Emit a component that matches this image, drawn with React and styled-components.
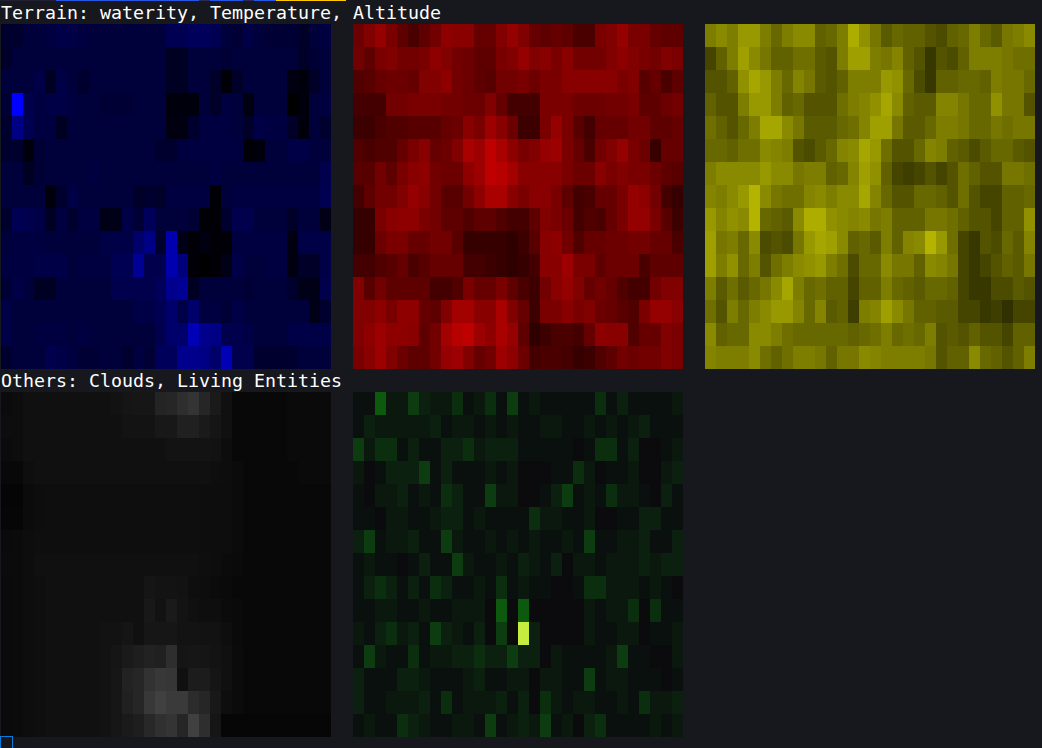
import React from "react";
import styled, { createGlobalStyle } from "styled-components";

const GlobalStyle = createGlobalStyle`
  html, body {
    margin: 0;
    height: 100%;
    background: #16181e;
  }
`;

// every map is 30 columns x 15 rows, one base-36 level per cell
const blueRows = [
  "88aabccbaaaaaaaeeffea9ca9997ab",
  "7aaaaaaaaaaaaaa66aaa9aaaaaa79a",
  "aaac6ca8aaaaaaa66aa717aaaa327a",
  "9zdbccbaa999aaa222a7ba3aaa02ab",
  "8kebb6aaaaaaaaa338bbba7cbb72a8",
  "8829aaaaaaaaaa88bbbbbb12aaccaa",
  "aa69aaaabaaaaaaaaaabaaaaaaaaad",
  "aaaa28caaaaa787bbbb1abbbbbbbbe",
  "8edc6b8bb44c9faaa9118ddaaa7aa4",
  "abbbaaaaaccchk8p41311bbbbb3ccc",
  "bbbcccabbbeemddpj1014caabb377c",
  "9ca66aaaaaddddflm6aaaa9aaa844d",
  "caaaaaaaaaaaccehchbb9caaaaaa48",
  "caabbbabaaaaaadhhqlkddcaaacccc",
  "8aaadcb99aa8b9ffllkhqdd8888aaa",
];

const redRows = [
  "gjmiebehlkkffjmjfefebbijmiifee",
  "heijhhiljhgeeijmjkikhhhjljihji",
  "cdfggfjjlhgedhhigiikkkkkijdfbe",
  "aaahhiiihhggjfaaaiiiggghhieegh",
  "99bccdddfgkinkg99imidafffhheef",
  "cbccfikfgjpnsplijmnifbhjmig8ff",
  "ddheiklhgglnsrokkkkiggkijiiged",
  "aehhjmkhddhlppkikkieabffimlha8",
  "88iklliheeceecaaejigacbfimmid9",
  "88giiffhhd888879dklhcffgghhffb",
  "aacdfbdfffaa9878akkniiegggbeee",
  "jdheeeeaaciffieb9hkmjfhfcaahjj",
  "jjlillfejookkpjf9iikijgfdcimmk",
  "jlnllkehorsnlpme79bbaflkkcffji",
  "iknjgeehmnjfhnlgabba89cehghhji",
];

const yellowRows = [
  "ikimmifikkefiplhdfeecbefifdhik",
  "aeinkheeggdcinnihjec8cbeiiihgg",
  "ccelomifjhdceiiimlfb8eeffeihhf",
  "eccimmiefcccgijlokeddjjhfflhhc",
  "gecfiookhdddfgjnnhddfiihffhghh",
  "ffeggkjicbdfjkomgccfjiedbdffdc",
  "ikkkkmkkhiiefjnlea9acacgecchhg",
  "jikmqkhggjkikkojfccffecgcaaeef",
  "mjlkqfedkpplkjkhieeehhgeccaeel",
  "nhifkbcbhmonkefdiejkqmga8cbfdj",
  "nilficgiklmigbffkhhekjha8acedh",
  "idgdfhkoifgeeaeeifedffea88bbdc",
  "gcifikmmjfjde9ijnkheeddaa897aa",
  "keffkkigfffffefgifgficdceccaee",
  "jiiikgegiihehhkjiiiihceekfecei",
];

const grayRows = [
  "78aaaaaaaabdeelmqtmga555556666",
  "88aaaaaaaaacccffjjgda555556666",
  "78aaaaaaaaaaaaaccccb8555556666",
  "559aaaaaaaaaaaaaaaa98755555666",
  "337899999999999999888755555555",
  "447899999999999999888755555555",
  "678999999999999999888755555555",
  "778aaaaaaaaaaaaaaa987655555555",
  "6789aaaaaaaaadccb9876555555555",
  "6789aaaaaaaaafbgca997655555555",
  "6789aaaaabbdaeeeccbb9655555555",
  "6789aaaaabdgikjqdedca755555555",
  "6789aaaaabekmsvuahhda755555555",
  "6789aaaaabejmvzwwpmf9755555555",
  "6789aaaaabeginrtmzqd4444444444",
];

const greenRows = [
  "116225322412415121111141311112",
  "132222231221212112211212123111",
  "524413113342333111110144130012",
  "201333513111212000114201120023",
  "102231214311522001351214221031",
  "110221123312111142211200113311",
  "351223115211212121121511223113",
  "121101311521121321302212223233",
  "134313143112141211001442221210",
  "112211211222060600000212240411",
  "213423153213050730000211220112",
  "152114122334335330211112511002",
  "311133211123112202211512211101",
  "311222314122231304212211214223",
  "121143211221512325120341111212",
];

const greenShades = [
  "#0b0b0e",
  "#0a100d",
  "#0a180e",
  "#0b200e",
  "#0b2e0f",
  "#0c3c10",
  "#0d5a0e",
  "#c6ec40",
];

const level = (ch) => parseInt(ch, 36);
const raw = (ch) => (level(ch) * 255) / 35;

// the dim end of the blue map sits lower than the other maps
const blue = (ch) => {
  const v = raw(ch);
  const b = v < 100 ? v * 0.8 : v * 0.8 + (v - 100) * 0.35;
  return `rgb(0,0,${Math.min(255, Math.round(b))})`;
};
const red = (ch) => `rgb(${Math.round(raw(ch) * 0.93)},0,0)`;
const yellow = (ch) => {
  const v = Math.round(raw(ch) * 0.95);
  return `rgb(${v},${v},0)`;
};
const gray = (ch) => {
  const l = level(ch);
  const v = Math.round(l * 1.6 + Math.max(0, l - 14) * 0.4);
  return `rgb(${v},${v},${v})`;
};
const green = (ch) => greenShades[level(ch)];

const topSegments = [
  { width: 56, color: "#211f33" },
  { width: 143, color: "#2557e6" },
  { width: 11, color: "#2b2a55" },
  { width: 33, color: "#2557e6" },
  { width: 11, color: "#2b2a55" },
  { width: 22, color: "#2557e6" },
  { width: 70, color: "#ffc800" },
];

const Page = styled.div`
  position: relative;
  width: 1042px;
  height: 748px;
  overflow: hidden;
  background: #16181e;
  color: #ffffff;
  font-family: "DejaVu Sans Mono", "Liberation Mono", monospace;
`;

const TopStrip = styled.div`
  display: flex;
  height: 1px;
`;

const StripSegment = styled.div`
  height: 1px;
`;

const Label = styled.div`
  height: 23px;
  padding-left: 1px;
  font-size: 18.27px;
  line-height: 24px;
  white-space: pre;
`;

const MapRow = styled.div`
  display: flex;
  gap: 22px;
  padding-left: 1px;
`;

const MapGrid = styled.div`
  display: grid;
  grid-template-columns: repeat(30, 11px);
  grid-auto-rows: 23px;
`;

const FocusBox = styled.div`
  position: absolute;
  left: 0;
  bottom: 0;
  width: 11px;
  height: 11px;
  border: 1px solid #0a7bdc;
  border-bottom: 0;
`;

const HeatMap = ({ rows, shade }) => (
  <MapGrid>
    {rows.flatMap((row, y) =>
      row.split("").map((ch, x) => (
        <div key={`${y}-${x}`} style={{ background: shade(ch) }} />
      ))
    )}
  </MapGrid>
);

const App = () => {
  return (
    <Page>
      <GlobalStyle />
      <TopStrip>
        {topSegments.map((seg, i) => (
          <StripSegment
            key={i}
            style={{ width: seg.width, background: seg.color }}
          />
        ))}
      </TopStrip>
      <Label>Terrain: waterity, Temperature, Altitude</Label>
      <MapRow>
        <HeatMap rows={blueRows} shade={blue} />
        <HeatMap rows={redRows} shade={red} />
        <HeatMap rows={yellowRows} shade={yellow} />
      </MapRow>
      <Label>Others: Clouds, Living Entities</Label>
      <MapRow>
        <HeatMap rows={grayRows} shade={gray} />
        <HeatMap rows={greenRows} shade={green} />
      </MapRow>
      <FocusBox />
    </Page>
  );
};

export default App;
